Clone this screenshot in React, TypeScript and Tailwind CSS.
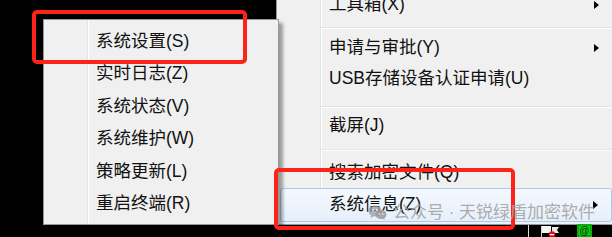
import React from 'react';

type Row =
  | { kind: 'item'; label: string; h: number; arrow?: boolean; active?: boolean }
  | { kind: 'sep'; h: number; line: number };

const leftItems = ['系统设置(S)', '实时日志(Z)', '系统状态(V)', '系统维护(W)', '策略更新(L)', '重启终端(R)'];

const rightRows: Row[] = [
  { kind: 'item', label: '工具箱(X)', h: 31, arrow: true },
  { kind: 'sep', h: 12, line: 7 },
  { kind: 'item', label: '申请与审批(Y)', h: 31, arrow: true },
  { kind: 'item', label: 'USB存储设备认证申请(U)', h: 31 },
  { kind: 'sep', h: 16, line: 12 },
  { kind: 'item', label: '截屏(J)', h: 31 },
  { kind: 'sep', h: 16, line: 8 },
  { kind: 'item', label: '搜索加密文件(Q)', h: 31 },
  { kind: 'item', label: '系统信息(Z)', h: 34, arrow: true, active: true },
];

function Arrow() {
  return <span className="ml-auto mr-[13px] h-0 w-0 border-y-[4.5px] border-l-[5px] border-y-transparent border-l-black" />;
}

function WeChatMark() {
  return (
    <svg width="19" height="15" viewBox="0 0 19 15" className="text-[#9a9a9a]">
      <ellipse cx="7" cy="6" rx="6.5" ry="5.5" fill="currentColor" opacity="0.75" />
      <path d="M3 10.5 L2.5 13 L5.5 11.2 Z" fill="currentColor" opacity="0.75" />
      <ellipse cx="13" cy="9.5" rx="5.5" ry="4.6" fill="currentColor" opacity="0.85" />
      <path d="M16 13 L16.8 15 L14.2 13.8 Z" fill="currentColor" opacity="0.85" />
      <circle cx="5" cy="5" r="0.9" fill="#f3f7fc" />
      <circle cx="9" cy="5" r="0.9" fill="#f3f7fc" />
      <circle cx="11.3" cy="9" r="0.8" fill="#f3f7fc" />
      <circle cx="14.7" cy="9" r="0.8" fill="#f3f7fc" />
    </svg>
  );
}

export default function App() {
  return (
    <div className="relative h-[237px] w-[612px] overflow-hidden bg-black font-['Liberation_Sans','Noto_Sans_CJK_SC',sans-serif] text-[17.5px] leading-none text-[#111]">
      {/* back menu */}
      <div className="absolute left-[276px] top-[-12px] flex w-[340px] flex-col border border-[#979797] bg-[linear-gradient(to_right,#f0f0f0_43px,#e2e3e3_43px,#e2e3e3_44px,#ffffff_44px,#ffffff_45px,#f0f0f0_45px)] pb-[2px]">
        {rightRows.map((row, i) =>
          row.kind === 'sep' ? (
            <div key={i} className="flex flex-col" style={{ height: row.h, paddingTop: row.line }}>
              <div className="ml-[44px] mr-[2px] h-px bg-[#e2e3e3]" />
              <div className="ml-[44px] mr-[2px] h-px bg-white" />
            </div>
          ) : row.active ? (
            <div
              key={i}
              className="mx-[3px] flex items-center rounded-[3px] border border-[#a8caf2] bg-[linear-gradient(to_bottom,#f5f9fe,#e6effb)] pl-[48px]"
              style={{ height: row.h }}
            >
              <span>{row.label}</span>
              {row.arrow && <Arrow />}
            </div>
          ) : (
            <div key={i} className="mx-[3px] flex items-center pl-[49px]" style={{ height: row.h }}>
              <span>{row.label}</span>
              {row.arrow && <Arrow />}
            </div>
          ),
        )}
      </div>

      {/* front menu */}
      <div className="absolute left-[43px] top-[19px] flex h-[206px] w-[236px] flex-col border border-[#979797] bg-[linear-gradient(to_right,#f0f0f0_43px,#e2e3e3_43px,#e2e3e3_44px,#ffffff_44px,#ffffff_45px,#f0f0f0_45px)] pt-[5px] shadow-[4px_4px_3px_rgba(0,0,0,0.35)]">
        {leftItems.map((label) => (
          <div key={label} className="flex h-[32.5px] items-center pl-[52px]">
            {label}
          </div>
        ))}
      </div>

      {/* annotation boxes */}
      <div className="absolute left-[32px] top-[10px] h-[54px] w-[215px] rounded-[5px] border-[4px] border-[#fc2318]" />
      <div className="absolute left-[274px] top-[168px] h-[62px] w-[241px] rounded-[5px] border-[4px] border-[#fc2318]" />

      {/* watermark */}
      <div className="absolute left-[368px] top-[204px] flex items-center gap-[6px] text-[17px] text-[#a3a3a3]/90">
        <WeChatMark />
        <span>公众号 · 天锐绿盾加密软件</span>
      </div>

      {/* tray icons */}
      <svg className="absolute left-[524px] top-[224px]" width="72" height="13" viewBox="0 0 72 13">
        <rect x="4" y="1" width="1" height="12" fill="#d8d8d8" />
        <path d="M17 2 H27 V9 H17 Z" fill="#f4f4f4" />
        <path d="M28 3 L35 3 L33 6 L35 9 L28 9 Z" fill="#e8e8e8" />
        <rect x="17" y="2" width="1" height="11" fill="#cfcfcf" />
        <circle cx="28" cy="10.5" r="3.2" fill="#e0101a" />
        <rect x="26" y="10" width="4" height="1.2" fill="#fff" />
        <rect x="53" y="0" width="15" height="13" fill="#16d616" />
        <rect x="54" y="1" width="13" height="11" fill="#0fd10f" stroke="#0a6a0a" strokeWidth="0.8" />
        <text x="60.5" y="10" fontSize="10" textAnchor="middle" fill="#063806" fontFamily="Liberation Sans, sans-serif" fontWeight="bold">
          @
        </text>
      </svg>
    </div>
  );
}
